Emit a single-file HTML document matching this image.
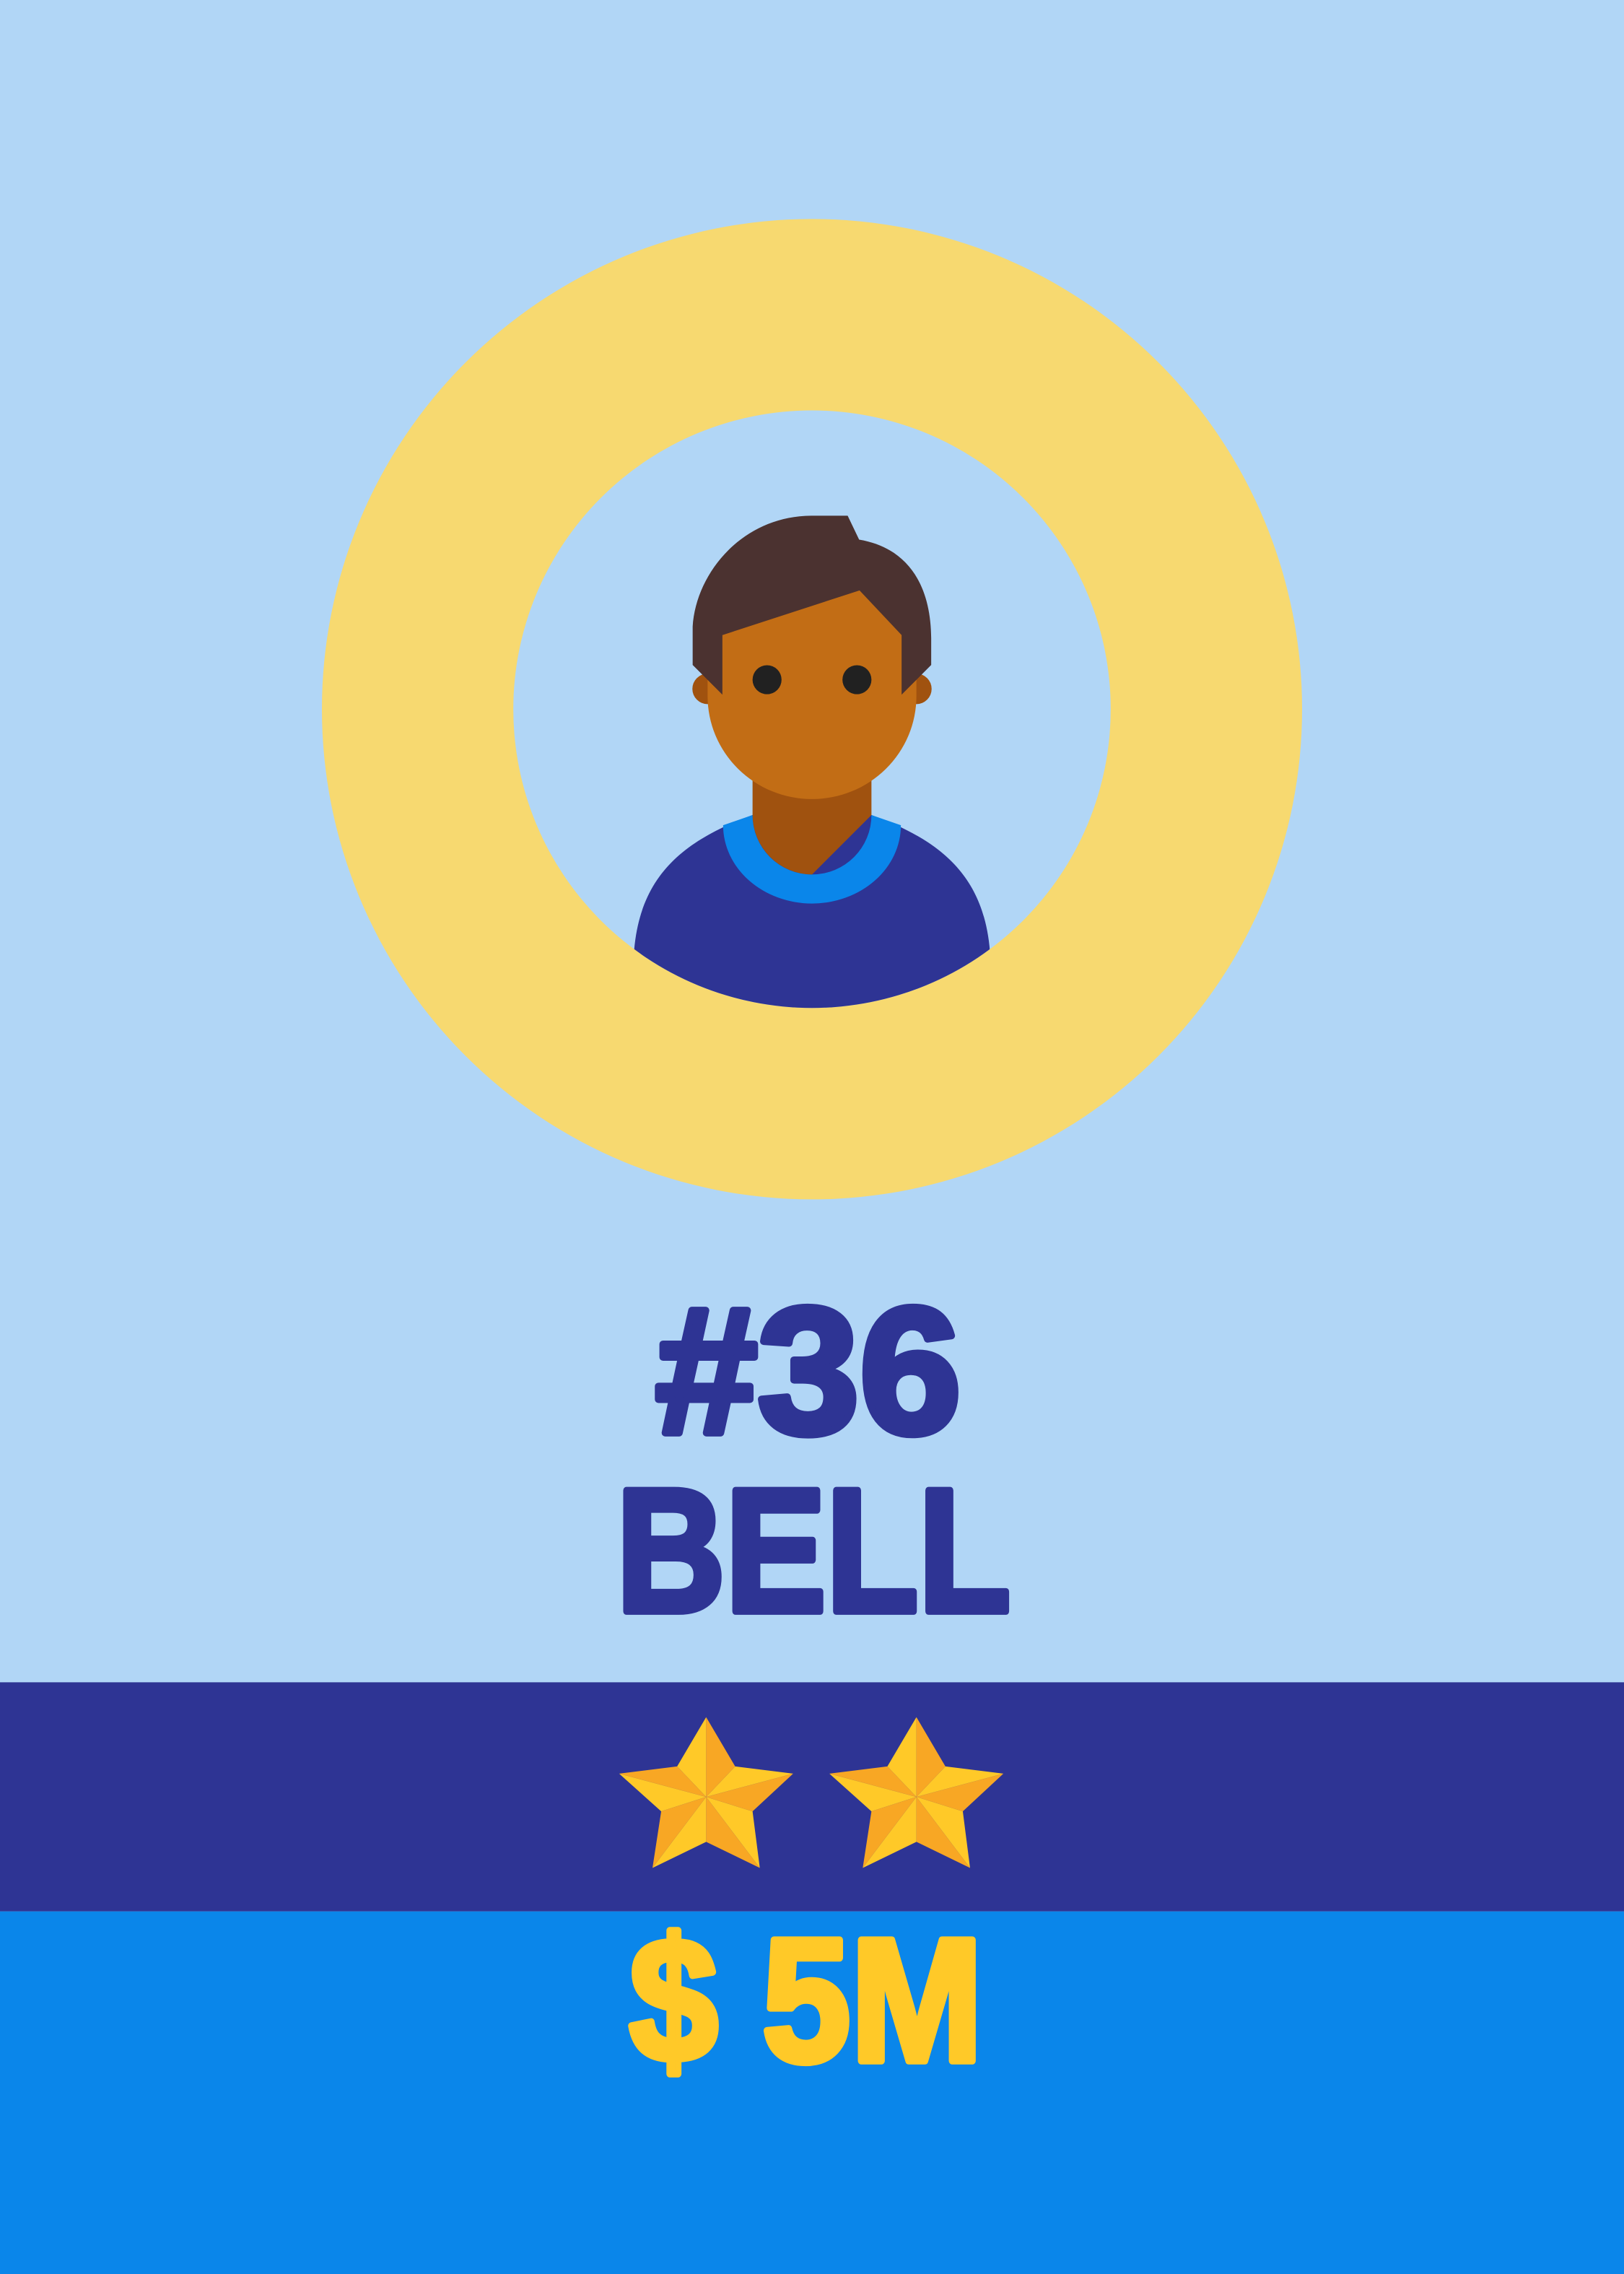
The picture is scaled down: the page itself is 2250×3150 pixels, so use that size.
<!DOCTYPE html>
<html><head><meta charset="utf-8"><style>html,body{margin:0;padding:0;width:2250px;height:3150px;overflow:hidden;background:#b1d6f6}svg{display:block}</style></head>
<body>
<svg width="2250" height="3150" viewBox="0 0 1120 1568" preserveAspectRatio="none" xmlns="http://www.w3.org/2000/svg">
<defs>
<clipPath id="c"><circle cx="560" cy="489" r="206"/></clipPath>
<g id="star">
<path fill="#ffc928" d="M467,1218 L487,1184 L487,1239Z M507,1218 L547,1223 L487,1239Z M519,1249 L524,1288 L487,1239Z M487,1270 L450,1288 L487,1239Z M456,1249 L427,1223 L487,1239Z"/>
<path fill="#f8a724" d="M487,1184 L507,1218 L487,1239Z M547,1223 L519,1249 L487,1239Z M524,1288 L487,1270 L487,1239Z M450,1288 L456,1249 L487,1239Z M427,1223 L467,1218 L487,1239Z"/>
</g>
</defs>
<rect width="1120" height="1568" fill="#b1d6f6"/>
<path fill="#f7d970" fill-rule="evenodd" d="M222,489 a338,338 0 1 0 676,0 a338,338 0 1 0 -676,0Z M354,489 a206,206 0 1 0 412,0 a206,206 0 1 0 -412,0Z"/>
<g clip-path="url(#c)">
<path fill="#2e3494" d="M437,660 C440,605 470,580 519,562 L601,562 C650,580 680,605 683,660 L690,720 L430,720Z"/>
<path fill="#0a86ea" d="M498.7,569 L519,562 L601,562 L621.3,569 A61.3,54 0 0 1 498.7,569Z"/>
<path fill="#2e3494" d="M519,562 A41,41 0 0 0 601,562Z"/>
<path fill="#a0520f" d="M519,520 L601,520 L601,562 L560,603 A41.2,41.2 0 0 1 519,562Z"/>
<circle cx="488" cy="475" r="10.5" fill="#a0520f"/>
<circle cx="632" cy="475" r="10.5" fill="#a0520f"/>
<path fill="#c26d15" d="M488,440 L500,405 L620,405 L632,440 L632,480 A72,71 0 0 1 488,480Z"/>
<circle cx="529" cy="468.7" r="10" fill="#212121"/>
<circle cx="591" cy="468.7" r="10" fill="#212121"/>
<path fill="#4b3230" d="M477.7,458.5 L477.7,432 C480,395 512,356 559.3,355.6 L584.6,355.6 L592.5,372.1 C628,378 642,406 642.2,440 L642.2,458.5 L621.8,479 L621.8,437.9 L592.8,407.1 L498.2,437.9 L498.2,479Z"/>
</g>
<g font-family="Liberation Sans, sans-serif" font-weight="bold" stroke-linejoin="round">
<text x="452" y="988" textLength="211" lengthAdjust="spacingAndGlyphs" font-size="124" fill="#2e3494" stroke="#2e3494" stroke-width="5">#36</text>
<text x="425" y="1111" textLength="272" lengthAdjust="spacingAndGlyphs" font-size="121" fill="#2e3494" stroke="#2e3494" stroke-width="5">BELL</text>
</g>
<rect x="0" y="1160" width="1120" height="158" fill="#2e3494"/>
<rect x="0" y="1318" width="1120" height="250" fill="#0a86ea"/>
<use href="#star"/>
<use href="#star" transform="translate(145,0)"/>
<text x="434" y="1421" textLength="244" lengthAdjust="spacingAndGlyphs" font-family="Liberation Sans, sans-serif" font-weight="bold" font-size="121" fill="#ffc928" stroke="#ffc928" stroke-width="5" stroke-linejoin="round">$ 5M</text>
</svg>
</body></html>
